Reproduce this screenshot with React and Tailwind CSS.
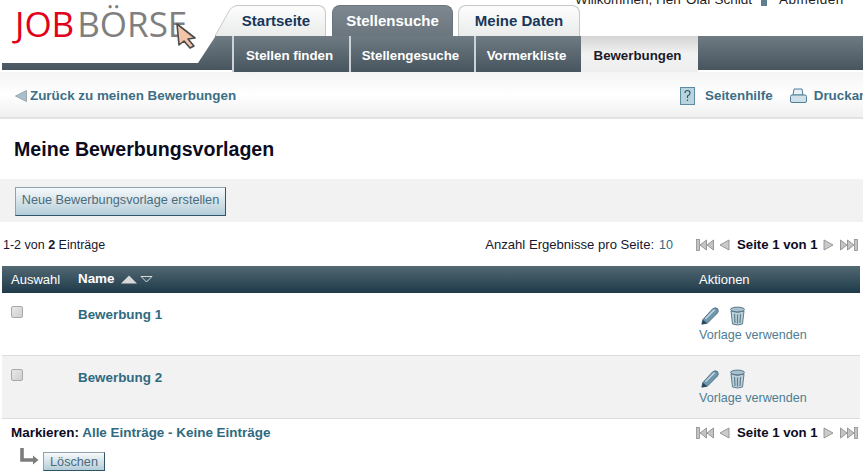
const FONT = "font-['Liberation_Sans',Arial,sans-serif]";

const Cursor = () => (
  <svg width="24" height="26" viewBox="0 0 24 26" className="absolute left-[175px] top-[23px]">
    <path d="M2 1 L20 15 L13 16 L19 23 L15 25 L9 18 L4 22 Z" fill="#f2c4a8" stroke="#4a4a4a" strokeWidth="1.6" strokeLinejoin="round" />
  </svg>
);

const Tab = ({ label, active }) => (
  <div
    className={
      active
        ? "w-[121px] h-[31px] rounded-t-lg bg-gradient-to-b from-[#7d8890] to-[#6a757d] flex items-center justify-center text-white font-bold text-[15px] border border-[#6a757d] border-b-0"
        : "w-[122px] h-[31px] rounded-t-lg bg-gradient-to-b from-[#fdfdfd] to-[#e9ecea] flex items-center justify-center text-[#17375a] font-bold text-[15px] border border-[#c4c9c8] border-b-0"
    }
  >
    {label}
  </div>
);

const HomeTab = () => (
  <div className="relative w-[112px] h-[31px]">
    <div className="w-[111px] h-full rounded-t-lg bg-gradient-to-b from-[#fdfdfd] to-[#e9ecea] flex items-center justify-center pl-[11px] text-[#17375a] font-bold text-[15px] border border-[#c4c9c8] border-b-0 [clip-path:polygon(0_100%,14px_20%,22px_0,100%_0,100%_100%)]">
      Startseite
    </div>
    <svg width="24" height="31" viewBox="0 0 24 31" className="absolute left-0 top-0">
      <path d="M0 31 L14 6 Q17 1 23 0.5" fill="none" stroke="#c4c9c8" />
    </svg>
  </div>
);

const SubItem = ({ label, w, active }) => (
  <div
    style={{ width: w }}
    className={
      active
        ? "h-[36px] pt-[3px] pr-[4px] flex items-center justify-center font-bold text-[13.3px] text-[#1a1a2a] bg-gradient-to-b from-[#d4d4d4] via-[#f2f2f2] to-[#eeeeee]"
        : "h-[36px] pt-[3px] pr-[4px] flex items-center justify-center font-bold text-[13.3px] text-white border-l-2 border-[#ccd2d5]"
    }
  >
    {label}
  </div>
);

const BackArrow = ({ className = "" }) => (
  <svg width="12" height="12" viewBox="0 0 12 12" className={className}>
    <path d="M11.5 0.5 V11.5 L0.5 6 Z" fill="#a9bfc9" stroke="#8b9ca5" strokeWidth="0.8" />
  </svg>
);

const Pager = () => {
  const edge = (flip) => (
    <svg width="18" height="12" viewBox="0 0 18 12" style={flip ? { transform: "scaleX(-1)" } : undefined}>
      <rect x="0.5" y="0.5" width="3" height="11" fill="#c4c4c4" stroke="#8f8f8f" strokeWidth="0.8" />
      <path d="M10.5 1 V11 L4 6 Z" fill="#c4c4c4" stroke="#8f8f8f" strokeWidth="0.9" />
      <path d="M17.5 1 V11 L11 6 Z" fill="#c4c4c4" stroke="#8f8f8f" strokeWidth="0.9" />
    </svg>
  );
  const step = (flip) => (
    <svg width="11" height="12" viewBox="0 0 11 12" style={flip ? { transform: "scaleX(-1)" } : undefined}>
      <path d="M10 1 V11 L1 6 Z" fill="#cbcbcb" stroke="#8f8f8f" strokeWidth="0.9" />
    </svg>
  );
  return (
    <div className="flex items-center">
      {edge(false)}
      <span className="w-[5px]" />
      {step(false)}
      <span className="w-[81px] ml-[7px] mr-[5px] text-[13.2px] text-[#0c0c24] font-bold whitespace-nowrap">Seite 1 von 1</span>
      {step(true)}
      <span className="w-[6px]" />
      {edge(true)}
    </div>
  );
};

const Pencil = () => (
  <svg width="20" height="20" viewBox="0 0 22 20">
    <path d="M3 14 L14 2 Q17 0 19.5 2 Q21 5 19 7 L8 18 L2 19 Z" fill="#6f96ad" stroke="#3f6579" strokeWidth="0.9" />
    <path d="M3 14 L8 18 L2 19 Z" fill="#27465a" />
    <path d="M6 13 L16 3" stroke="#c5d6df" strokeWidth="1.6" />
  </svg>
);

const Trash = () => (
  <svg width="17" height="20" viewBox="0 0 17 20">
    <ellipse cx="8.5" cy="3.5" rx="7" ry="2.4" fill="#a9c0cc" stroke="#4f7084" strokeWidth="0.9" />
    <path d="M2 5 L3.5 18 Q8.5 20 13.5 18 L15 5 Q8.5 8 2 5 Z" fill="#bcd0da" stroke="#4f7084" strokeWidth="0.9" />
    <path d="M5.5 8 L6 17 M8.5 8.5 V17.5 M11.5 8 L11 17" stroke="#5f7f91" strokeWidth="1.2" />
  </svg>
);

const Row = ({ name, shaded }) => (
  <div className={`h-[63px] flex border-b border-[#dcdcdc] ${shaded ? "bg-[#f2f2f2]" : "bg-white"}`}>
    <div className="w-[76px] pl-[9px] pt-[13px]">
      <div className="w-[12px] h-[12px] rounded-[2px] border border-[#a9a9a9] bg-gradient-to-br from-[#e8e8e8] to-[#cfcfcf]" />
    </div>
    <div className="flex-1 pt-[12px] text-[13.4px] font-bold text-[#2f6a80]">{name}</div>
    <div className="w-[161px] pt-[13px]">
      <div className="flex items-center gap-[9px] pl-px">
        <Pencil />
        <Trash />
      </div>
      <div className="text-[12.6px] text-[#4f7d92] leading-[14px] mt-[2px]">Vorlage verwenden</div>
    </div>
  </div>
);

const App = () => (
  <div className={`${FONT} w-[863px] h-[473px] overflow-hidden bg-white relative`}>
    {/* Header */}
    <div className="relative h-[72px] flex">
      <div className="absolute left-[575px] top-[-10px] flex items-center text-[13.5px] text-[#222] whitespace-nowrap">
        Willkommen, Herr Olaf Schidt
        <span className="ml-[9px] mr-[12px] w-[6px] h-[12px] bg-[#5f7e8f]" />
        <span className="tracking-[0.5px]">Abmelden</span>
      </div>
      <div className="w-[215px] shrink-0 relative">
        <div className="absolute left-[15px] top-[3px] font-['Open_Sans',sans-serif] text-[35px] leading-[42px] whitespace-nowrap flex">
          <span className="text-[#e2001a] mr-[3px]">JOB</span>
          <span className="text-[#7f7f7f]">BÖRSE</span>
        </div>
        <Cursor />
        <svg width="215" height="33" viewBox="0 0 215 33" className="absolute left-0 top-[37px]">
          <defs>
            <linearGradient id="bar" x1="0" y1="0" x2="0" y2="1">
              <stop offset="0" stopColor="#6f7b83" />
              <stop offset="1" stopColor="#47555e" />
            </linearGradient>
          </defs>
          <path d="M2 26 H198 L215 0 V33 H2 Z" fill="url(#bar)" />
        </svg>
      </div>
      <div className="flex-1 flex flex-col">
        <div className="h-[37px] flex items-end gap-[5px] border-b border-[#5c676e]">
          <HomeTab />
          <Tab label="Stellensuche" active />
          <Tab label="Meine Daten" />
        </div>
        <div className="flex h-[36px] -mt-px">
          <div className="w-[17px] h-[34px] bg-gradient-to-b from-[#6f7b83] to-[#47555e]" />
          <div className="flex bg-gradient-to-b from-[#6f7b83] to-[#47555e]">
            <SubItem label="Stellen finden" w={117} />
            <SubItem label="Stellengesuche" w={125} />
            <SubItem label="Vormerkliste" w={107} />
          </div>
          <SubItem label="Bewerbungen" w={117} active />
          <div className="flex-1 h-[34px] bg-gradient-to-b from-[#6f7b83] to-[#47555e]" />
        </div>
      </div>
    </div>

    {/* Back link bar */}
    <div className="h-[47px] flex items-center justify-between pl-[15px] bg-gradient-to-b from-[#f4f4f4] via-white to-[#f0f0f0] border-b-2 border-[#e2e2e2] text-[13.4px] font-bold text-[#3c6f85] pt-[4px]">
      <div className="flex items-center gap-[3px]">
        <BackArrow />
        Zurück zu meinen Bewerbungen
      </div>
      <div className="flex items-center w-[183px] shrink-0 overflow-hidden whitespace-nowrap">
        <svg width="15" height="18" viewBox="0 0 15 18" className="shrink-0">
          <rect x="0.5" y="0.5" width="14" height="17" fill="#b9d3df" stroke="#5d8ba1" />
          <path d="M5 6 Q5 3.5 7.5 3.5 Q10 3.5 10 6 Q10 8 7.5 9 V11 M7.5 12.5 V14" fill="none" stroke="#34566a" strokeWidth="1.2" />
        </svg>
        <span className="ml-[10px]">Seitenhilfe</span>
        <svg width="17" height="16" viewBox="0 0 17 16" className="ml-[17px] shrink-0">
          <path d="M4 1 H12 L13 7 H3 Z" fill="#e9f1f5" stroke="#4e7f97" />
          <rect x="0.5" y="7" width="16" height="7.5" rx="1.5" fill="#cfe0e9" stroke="#4e7f97" />
        </svg>
        <span className="ml-[7px]">Druckansicht</span>
      </div>
    </div>

    {/* Title */}
    <h1 className="h-[60px] flex items-center pl-[14px] pt-[2px] text-[19.6px] font-bold text-[#0b0b1e]">
      Meine Bewerbungsvorlagen
    </h1>

    {/* Create button */}
    <div className="h-[43px] bg-[#f2f2f2] flex items-center pl-[15px] pt-px">
      <button className="w-[211px] h-[29px] border border-[#8fa3ab] border-b-[#2f5569] border-r-[#2f5569] bg-gradient-to-b from-[#f7f9fa] to-[#b4cdd9] text-[12.7px] text-[#4a6b7c] whitespace-nowrap">
        Neue Bewerbungsvorlage erstellen
      </button>
    </div>

    {/* Result info */}
    <div className="h-[44px] flex items-center pl-[3px] pr-[5px] pt-[2px] text-[12.5px] text-[#17172e]">
      <div className="flex-1">
        1-2 von <b>2</b> Einträge
      </div>
      <div className="mr-[23px] whitespace-nowrap">
        <span className="text-[13.1px]">Anzahl Ergebnisse pro Seite:</span>
        <span className="text-[#2f6a80] ml-[5px]">10</span>
      </div>
      <Pager />
    </div>

    {/* Table */}
    <div className="mx-[2px] w-[858px]">
      <div className="h-[27px] flex items-center text-white text-[13px] bg-gradient-to-b from-[#536973] to-[#1f3a4a]">
        <div className="w-[76px] pl-[9px]">Auswahl</div>
        <div className="flex-1 flex items-center font-bold text-[13.4px]">
          Name
          <svg width="33" height="9" viewBox="0 0 33 9" className="ml-[7px]">
            <path d="M0 8.5 L8 0.5 L16 8.5 Z" fill="#d9d9d9" />
            <path d="M20 1.5 H31 L25.5 7 Z" fill="#3f5865" stroke="#d9d9d9" strokeWidth="1" />
          </svg>
        </div>
        <div className="w-[161px]">Aktionen</div>
      </div>
      <Row name="Bewerbung 1" />
      <Row name="Bewerbung 2" shaded />
    </div>

    {/* Footer */}
    <div className="flex items-center justify-between pl-[11px] pr-[5px] pt-[4px] text-[13.45px]">
      <div className="font-bold text-[#2f6a80]">
        <span className="text-[#0b0b1e]">Markieren:</span> Alle Einträge - Keine Einträge
      </div>
      <Pager />
    </div>
    <div className="flex items-end pl-[20px] pt-[4px]">
      <svg width="19" height="20" viewBox="0 0 19 20" className="mb-[4px]">
        <path d="M2 1 V13 H14" fill="none" stroke="#7d7d7d" strokeWidth="3.6" />
        <path d="M13 8.5 L18.5 13 L13 17.5 Z" fill="#7d7d7d" />
      </svg>
      <button className="ml-[4px] w-[62px] h-[19px] border border-[#8fa3ab] border-b-[#2f5569] border-r-[#2f5569] bg-gradient-to-b from-[#f7f9fa] to-[#b4cdd9] text-[12.7px] leading-[16px] text-[#4a6b7c]">
        Löschen
      </button>
    </div>
  </div>
);

export default App;
